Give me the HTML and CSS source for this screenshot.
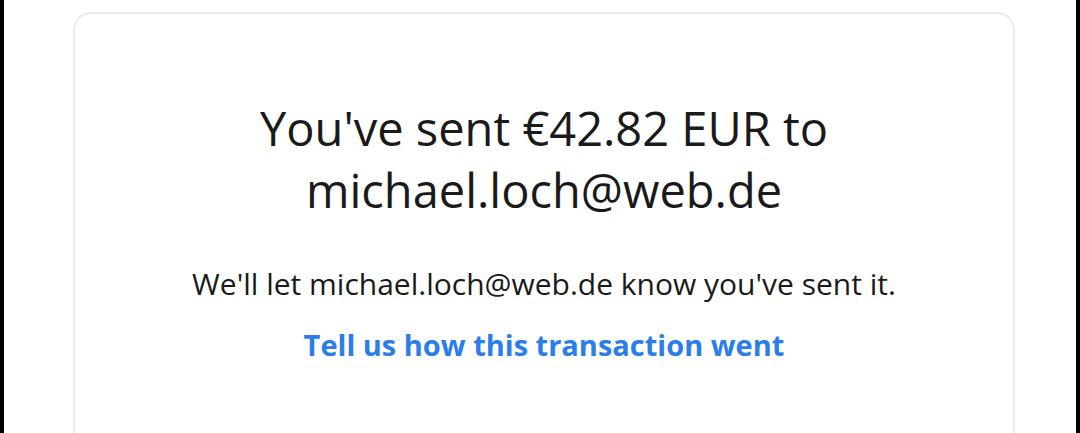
FILE: index.html
```html
<!DOCTYPE html>
<html lang="en">
<head>
    <meta charset="UTF-8">
    <meta name="viewport" content="width=device-width, initial-scale=1.0">
    <title>Payment Sent</title>
    <link rel="stylesheet" href="styles.css">
</head>
<body>
    <div class="frame">
        <div class="sent-card">
            <h1>You've sent €42.82 EUR to<br>michael.loch@web.de</h1>
            <p class="notice">We'll let michael.loch@web.de know you've sent it.</p>
            <a class="feedback-link" href="#">Tell us how this transaction went</a>
        </div>
    </div>
</body>
</html>
```

FILE: styles.css
```css
html, body {
    margin: 0;
    height: 100%;
    background-color: #000;
}
body {
    padding: 0 4px;
    box-sizing: border-box;
    overflow: hidden;
    font-family: "Open Sans", Arial, sans-serif;
}
.frame {
    background-color: #ffffff;
    height: 100%;
    padding: 12px 61px 0 69px;
    box-sizing: border-box;
}
.sent-card {
    border: 2px solid #ebebe9;
    border-bottom: none;
    border-radius: 18px 18px 0 0;
    height: 480px;
    text-align: center;
    padding-top: 83px;
    box-sizing: border-box;
}
.sent-card h1 {
    margin: 0;
    font-size: 47px;
    font-weight: 400;
    line-height: 62px;
    color: #1a1a1a;
}
.notice {
    margin: 43px 0 0;
    font-size: 30px;
    line-height: 40px;
    color: #1a1a1a;
}
.feedback-link {
    display: inline-block;
    margin-top: 21px;
    font-size: 29px;
    line-height: 40px;
    font-weight: 700;
    color: #2b7de9;
    text-decoration: none;
}
```
